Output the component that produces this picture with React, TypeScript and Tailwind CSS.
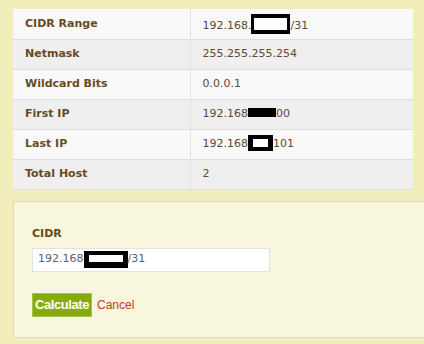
import type { ReactNode } from 'react'

const FONT = '"DejaVu Sans", Verdana, sans-serif'

function Redact({ w, h, b, align }: { w: number; h: number; b: string; align: string }) {
  return <span className={`inline-block border-black bg-white ${b} ${align}`} style={{ width: w, height: h }} />
}

const rows: { label: string; value: ReactNode }[] = [
  {
    label: 'CIDR Range',
    value: (
      <>
        192.168.
        <Redact w={39} h={20} b="border-x-[3px] border-y-[4px]" align="align-[-5px]" />
        /31
      </>
    ),
  },
  { label: 'Netmask', value: '255.255.255.254' },
  { label: 'Wildcard Bits', value: '0.0.0.1' },
  {
    label: 'First IP',
    value: (
      <>
        192.168
        <span className="inline-block h-[9px] w-[28px] bg-black align-[0px]" />
        00
      </>
    ),
  },
  {
    label: 'Last IP',
    value: (
      <>
        192.168
        <Redact w={25} h={16} b="border-x-[5px] border-y-[4px]" align="align-[-4px]" />
        101
      </>
    ),
  },
  { label: 'Total Host', value: '2' },
]

export default function App() {
  return (
    <div className="h-[344px] w-[424px] overflow-hidden bg-[#f2eebb] pl-[13px] pt-[9px]" style={{ fontFamily: FONT }}>
      <table className="w-[400px] border-collapse text-[11px]">
        <tbody>
          {rows.map((r, i) => (
            <tr key={r.label} className={`h-[30px] border-b border-[#dedede] ${i % 2 ? 'bg-[#efefef]' : 'bg-[#f9f9f9]'}`}>
              <td className="w-[177px] border-r border-[#e2e2e2] pl-3 align-middle font-bold text-[#664b24]">{r.label}</td>
              <td className="pl-3 align-middle text-[#5e4a30]">{r.value}</td>
            </tr>
          ))}
        </tbody>
      </table>

      <div className="mt-[11px] h-[137px] border border-r-0 border-[#dcd9c0] bg-[#f8f6dc] pl-[18px] pt-[25px]">
        <div className="mb-[8px] text-[11px] font-bold leading-[13px] text-[#664b24]">CIDR</div>
        <div className="flex h-[24px] w-[238px] items-center border border-[#e3e3e3] bg-white pl-[5px] text-[11px] text-[#60606e]">
          <span>
            192.168
            <Redact w={44} h={17} b="border-x-[5px] border-t-[4px] border-b-[6px]" align="align-[-6px]" />
            /31
          </span>
        </div>
        <div className="mt-[21px] flex items-center gap-[5px]" style={{ fontFamily: '"Liberation Sans", Arial, sans-serif' }}>
          <button className="h-[24px] w-[60px] border border-[#a3c544] bg-[#88ab0c] text-[13px] font-bold tracking-[-0.4px] text-white">
            Calculate
          </button>
          <span className="text-[12px] text-[#c23b22]">Cancel</span>
        </div>
      </div>
    </div>
  )
}
